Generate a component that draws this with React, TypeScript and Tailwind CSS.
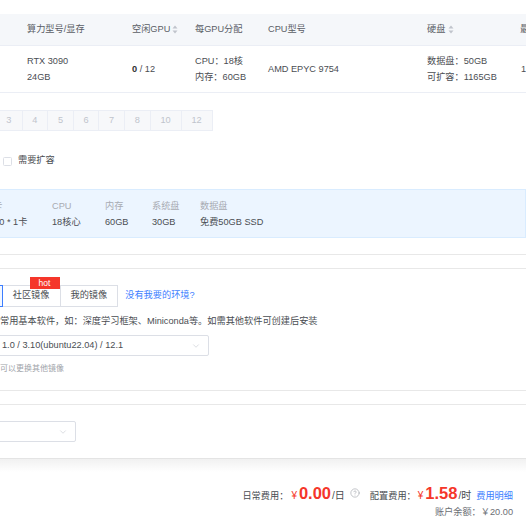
import { ChevronDown, CircleHelp } from 'lucide-react'

function SortIcon() {
  return (
    <svg width="6" height="9" viewBox="0 0 6 9" className="shrink-0">
      <path d="M3 0.5 L5.5 3.5 L0.5 3.5 Z" fill="#c0c4cc" />
      <path d="M3 8.5 L5.5 5.5 L0.5 5.5 Z" fill="#c0c4cc" />
    </svg>
  )
}

const pages = ['3', '4', '5', '6', '7', '8', '10', '12']

const specs = [
  { label: '显卡', value: '3090 * 1卡', w: 'w-[68px]' },
  { label: 'CPU', value: '18核心', w: 'w-[53px]' },
  { label: '内存', value: '60GB', w: 'w-[47px]' },
  { label: '系统盘', value: '30GB', w: 'w-[48px]' },
  { label: '数据盘', value: '免费50GB SSD', w: 'flex-1' },
]

export default function App() {
  return (
    <div className="w-[526px] h-[526px] overflow-hidden bg-white text-[9.2px] text-[#5a5e66] font-[family-name:'Liberation_Sans','Noto_Sans_CJK_SC',sans-serif]">
      {/* 机器列表 */}
      <div className="pt-[14px]">
        <div className="flex items-center h-[32px] bg-[#f5f7fa] border-b border-[#ebeef5] whitespace-nowrap">
          <div className="w-[27px] shrink-0" />
          <div className="w-[105px] shrink-0">算力型号/显存</div>
          <div className="w-[63px] shrink-0 flex items-center gap-[2px]">
            空闲GPU <SortIcon />
          </div>
          <div className="w-[73px] shrink-0">每GPU分配</div>
          <div className="w-[159px] shrink-0">CPU型号</div>
          <div className="w-[93px] shrink-0 flex items-center gap-[3px]">
            硬盘 <SortIcon />
          </div>
          <div className="flex-1">最高CUDA</div>
        </div>
        <div className="flex items-center h-[47px] border-b border-[#ebeef5] whitespace-nowrap leading-[16px] text-[#4a4d52]">
          <div className="w-[27px] shrink-0" />
          <div className="w-[105px] shrink-0">
            <div>RTX 3090</div>
            <div>24GB</div>
          </div>
          <div className="w-[63px] shrink-0">
            <span className="font-bold text-[#303133]">0</span> / 12
          </div>
          <div className="w-[73px] shrink-0">
            <div>CPU：18核</div>
            <div>内存：60GB</div>
          </div>
          <div className="w-[159px] shrink-0">AMD EPYC 9754</div>
          <div className="w-[93px] shrink-0">
            <div>数据盘：50GB</div>
            <div>可扩容：1165GB</div>
          </div>
          <div className="flex-1 pl-[1px]">12.4</div>
        </div>
      </div>

      {/* GPU 数量 */}
      <div className="mt-[17px] -ml-[5px] flex h-[21px] w-max border border-[#ebeef5] bg-[#f7f8fa] text-[#c0c4cc]">
        {pages.map((p, i) => (
          <div
            key={p}
            className={`flex items-center justify-center ${p.length > 1 ? 'w-[31px]' : 'w-[25.6px]'} ${i > 0 ? 'border-l border-[#ebeef5]' : ''}`}
          >
            {p}
          </div>
        ))}
      </div>

      <div className="mt-[25px] flex items-center h-[10px]">
        <div className="ml-[3px] w-[9px] h-[9px] border border-[#dcdfe6] rounded-[1.5px] bg-white" />
        <span className="ml-[6px] text-[#4a4d52]">需要扩容</span>
      </div>

      {/* 配置概览 */}
      <div className="mt-[23px] -ml-[30px] h-[49px] pl-[13px] flex flex-col justify-center bg-[#ecf5ff] border border-[#d9ecff] leading-[16px] whitespace-nowrap">
        <div className="flex text-[#a8abb2]">
          {specs.map((s) => (
            <div key={s.label} className={`${s.w} shrink-0`}>
              {s.label}
            </div>
          ))}
        </div>
        <div className="flex text-[#4a4d52]">
          {specs.map((s) => (
            <div key={s.label} className={`${s.w} shrink-0`}>
              {s.value}
            </div>
          ))}
        </div>
      </div>

      <div className="mt-[16px] h-px bg-[#e8e8e8]" />
      <div className="mt-[13px] h-px bg-[#e8e8e8]" />

      {/* 镜像 */}
      <div className="mt-[16px] flex items-center h-[22px] whitespace-nowrap">
        <div className="-ml-[56px] h-full px-[10px] flex items-center border border-[#3d7eff] text-[#3d7eff] bg-[#f2f7ff]">
          基础镜像
        </div>
        <div className="relative h-full px-[10px] flex items-center border-y border-r border-[#dcdfe6] text-[#4a4d52]">
          社区镜像
          <span className="absolute right-0 -top-[9px] w-[30px] h-[12px] flex items-center justify-center bg-[#f5362a] text-white text-[8.5px] leading-none">
            hot
          </span>
        </div>
        <div className="h-full px-[10px] flex items-center border-y border-r border-[#dcdfe6] text-[#4a4d52]">
          我的镜像
        </div>
        <span className="ml-[7px] text-[#3d7eff]">没有我要的环境?</span>
      </div>

      <div className="mt-[7px] leading-[14px] whitespace-nowrap text-[#4a4d52]">
        常用基本软件，如：深度学习框架、Miniconda等。如需其他软件可创建后安装
      </div>

      <div className="mt-[7px] -ml-[10px] w-[219px] h-[21px] pl-[11px] pr-[7px] flex items-center justify-between border border-[#dcdfe6] rounded-[2px] text-[#4a4d52] whitespace-nowrap">
        <span>1.0 / 3.10(ubuntu22.04) / 12.1</span>
        <ChevronDown size={10} strokeWidth={1.2} color="#b8bcc4" />
      </div>

      <div className="mt-[7px] leading-[12px] text-[8px] text-[#a0a3a9] whitespace-nowrap">可以更换其他镜像</div>

      <div className="mt-[15px] h-px bg-[#e8e8e8]" />
      <div className="mt-[13px] h-px bg-[#e8e8e8]" />

      <div className="mt-[16px] -ml-[10px] w-[86px] h-[21px] pr-[7px] flex items-center justify-end border border-[#dcdfe6] rounded-[2px]">
        <ChevronDown size={10} strokeWidth={1.2} color="#b8bcc4" />
      </div>

      <div className="mt-[16px] h-px bg-[#e4e4e4]" />
      <div className="h-[13px] bg-gradient-to-b from-[#f1f1f1] to-white" />

      {/* 费用 */}
      <div className="mt-[11px] pr-[13px] flex justify-end items-baseline h-[20px] leading-[20px] whitespace-nowrap text-[#4a4d52]">
        <span>日常费用：</span>
        <span className="ml-[3px] text-[10px] text-[#f5362a]">¥</span>
        <span className="ml-[2px] text-[16.5px] font-bold text-[#f5362a]">0.00</span>
        <span className="ml-[1px] text-[10px]">/日</span>
        <CircleHelp size={10} strokeWidth={1.4} color="#9a9da3" className="ml-[5px] self-center" />
        <span className="ml-[10px]">配置费用：</span>
        <span className="ml-[2px] text-[10px] text-[#f5362a]">¥</span>
        <span className="ml-[2px] text-[16.5px] font-bold text-[#f5362a]">1.58</span>
        <span className="ml-[1px] text-[10px]">/时</span>
        <span className="ml-[5px] text-[#3d7eff]">费用明细</span>
      </div>
      <div className="mt-[2px] pr-[13px] flex justify-end leading-[14px] whitespace-nowrap text-[#6b6e74]">
        账户余额：￥20.00
      </div>
    </div>
  )
}
